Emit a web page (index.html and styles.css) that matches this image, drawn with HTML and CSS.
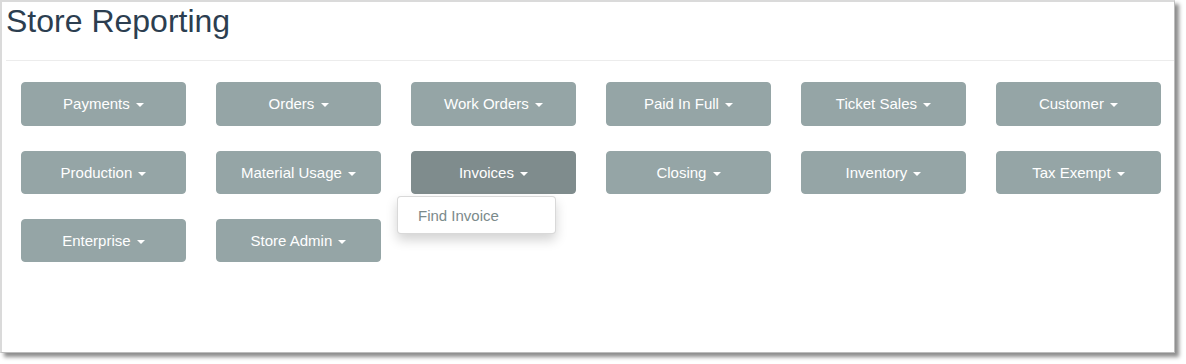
FILE: index.html
```html
<!DOCTYPE html>
<html lang="en">
<head>
    <meta charset="UTF-8">
    <meta name="viewport" content="width=device-width, initial-scale=1.0">
    <title>Store Reporting</title>
    <link rel="stylesheet" href="styles.css">
</head>
<body>
<div class="frame">
    <h2 class="page-title">Store Reporting</h2>
    <hr class="title-rule">

    <div class="report-grid">
        <!-- row 1 -->
        <div class="cell"><button class="btn">Payments <span class="caret"></span></button></div>
        <div class="cell"><button class="btn">Orders <span class="caret"></span></button></div>
        <div class="cell"><button class="btn">Work Orders <span class="caret"></span></button></div>
        <div class="cell"><button class="btn">Paid In Full <span class="caret"></span></button></div>
        <div class="cell"><button class="btn">Ticket Sales <span class="caret"></span></button></div>
        <div class="cell"><button class="btn">Customer <span class="caret"></span></button></div>

        <!-- row 2 -->
        <div class="cell"><button class="btn">Production <span class="caret"></span></button></div>
        <div class="cell"><button class="btn">Material Usage <span class="caret"></span></button></div>
        <div class="cell open">
            <button class="btn active">Invoices <span class="caret"></span></button>
            <ul class="dropdown-menu">
                <li><a href="#">Find Invoice</a></li>
            </ul>
        </div>
        <div class="cell"><button class="btn">Closing <span class="caret"></span></button></div>
        <div class="cell"><button class="btn">Inventory <span class="caret"></span></button></div>
        <div class="cell"><button class="btn">Tax Exempt <span class="caret"></span></button></div>

        <!-- row 3 -->
        <div class="cell"><button class="btn">Enterprise <span class="caret"></span></button></div>
        <div class="cell"><button class="btn">Store Admin <span class="caret"></span></button></div>
    </div>
</div>
</body>
</html>
```

FILE: styles.css
```css
* {
    margin: 0;
    padding: 0;
    box-sizing: border-box;
}

html, body {
    height: 364px;
}

body {
    font-family: 'Liberation Sans', Arial, sans-serif;
    font-size: 15px;
    line-height: 1.42857;
    background-color: #fff;
    color: #2c3e50;
}

.frame {
    width: 1175px;
    height: 353px;
    padding-left: 4px;
    background: #fff;
    border-top: 2px solid #dadada;
    border-left: 2px solid #dadada;
    border-right: 1px solid #bdbdbd;
    border-bottom: 1px solid #bdbdbd;
    box-shadow: 4px 4px 4px rgba(0, 0, 0, 0.45);
}

.page-title {
    font-size: 32px;
    font-weight: normal;
    line-height: 1.1;
    margin-top: 2px;
    color: #2c3e50;
}

.title-rule {
    border: 0;
    border-top: 1px solid #ececec;
    margin: 21px 0 21px;
}

.report-grid {
    display: grid;
    grid-template-columns: repeat(6, 195px);
    row-gap: 25px;
}

.cell {
    position: relative;
    padding: 0 15px;
}

.btn {
    display: block;
    width: 100%;
    padding: 10px 15px;
    font-family: inherit;
    font-size: 15px;
    line-height: 1.42857;
    color: #fff;
    background-color: #95a5a6;
    border: 1px solid #95a5a6;
    border-radius: 4px;
    text-align: center;
    cursor: pointer;
}

.btn.active {
    background-color: #7f8c8d;
    border-color: #7f8c8d;
}

.caret {
    display: inline-block;
    width: 0;
    height: 0;
    margin-left: 2px;
    vertical-align: middle;
    border-top: 4px solid;
    border-right: 4px solid transparent;
    border-left: 4px solid transparent;
}

.dropdown-menu {
    position: absolute;
    top: 100%;
    left: 1px;
    z-index: 10;
    min-width: 159px;
    margin-top: 2px;
    padding: 5px 0;
    list-style: none;
    background: #fff;
    border: 1px solid rgba(0, 0, 0, 0.15);
    border-radius: 4px;
    box-shadow: 0 6px 12px rgba(0, 0, 0, 0.175);
}

.dropdown-menu a {
    display: block;
    padding: 4px 20px 2px;
    line-height: 20px;
    color: #7b8a8b;
    text-decoration: none;
    white-space: nowrap;
}
```
